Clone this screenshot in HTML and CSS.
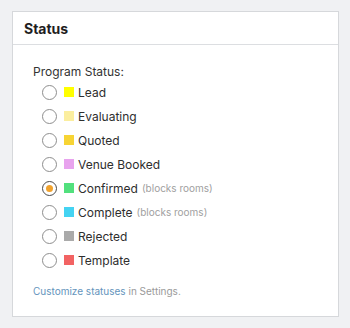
FILE: index.html
```html
<!DOCTYPE html>
<html>
<head>
<meta charset="utf-8">
<link rel="stylesheet" href="styles.css">
</head>
<body>
<div class="card">
  <div class="card-header">Status</div>
  <div class="card-body">
    <div class="label">Program Status:</div>
    <div class="options">
      <label class="opt"><span class="radio"></span><span class="sw" style="background:#ffff00"></span><span class="name">Lead</span></label>
      <label class="opt"><span class="radio"></span><span class="sw" style="background:#fbee9f"></span><span class="name">Evaluating</span></label>
      <label class="opt"><span class="radio"></span><span class="sw" style="background:#f7d434"></span><span class="name">Quoted</span></label>
      <label class="opt"><span class="radio"></span><span class="sw" style="background:#e8a3ee"></span><span class="name">Venue Booked</span></label>
      <label class="opt"><span class="radio checked"></span><span class="sw" style="background:#52e07d"></span><span class="name">Confirmed</span><span class="note">(blocks rooms)</span></label>
      <label class="opt"><span class="radio"></span><span class="sw" style="background:#44d3f2"></span><span class="name">Complete</span><span class="note">(blocks rooms)</span></label>
      <label class="opt"><span class="radio"></span><span class="sw" style="background:#aaaaaa"></span><span class="name">Rejected</span></label>
      <label class="opt"><span class="radio"></span><span class="sw" style="background:#f26363"></span><span class="name">Template</span></label>
    </div>
    <div class="footer"><a class="link" href="#">Customize statuses</a> in Settings.</div>
  </div>
</div>
</body>
</html>
```

FILE: styles.css
```css
html, body {
  margin: 0;
  padding: 0;
  background: #f0f1f3;
}
body {
  padding: 11px 11px 0 12px;
  font-family: Inter, "Noto Sans", sans-serif;
  color: #2b2b2b;
}
.card {
  width: 325px;
  height: 304px;
  background: #fff;
  border: 1px solid #d6d8db;
  display: flex;
  flex-direction: column;
}
.card-header {
  height: 33px;
  box-sizing: border-box;
  padding: 0 11px;
  display: flex;
  align-items: center;
  font-size: 14px;
  font-weight: 700;
  color: #1e1e1e;
  border-bottom: 1px solid #dcdee1;
}
.card-body {
  padding: 19px 20px 0 20px;
}
.label {
  font-size: 12px;
  line-height: 16px;
  color: #333;
}
.options {
  display: flex;
  flex-direction: column;
  padding-left: 9px;
}
.opt {
  height: 24px;
  display: flex;
  align-items: center;
  font-size: 12px;
  color: #2e2e2e;
}
.radio {
  width: 13px;
  height: 13px;
  border: 1px solid #8e8e8e;
  border-radius: 50%;
  box-sizing: content-box;
  display: flex;
  align-items: center;
  justify-content: center;
  margin-right: 7px;
  background: #fff;
}
.radio.checked {
  border-color: #4a4a4a;
}
.radio.checked::after {
  content: "";
  width: 7px;
  height: 7px;
  border-radius: 50%;
  background: #f0a22e;
}
.sw {
  width: 10px;
  height: 10px;
  margin-right: 4px;
}
.note {
  font-size: 10px;
  color: #a0a0a0;
  margin-left: 4px;
}
.footer {
  margin-top: 11px;
  font-size: 10px;
  line-height: 16px;
  color: #9a9a9a;
}
.link {
  color: #6494bc;
  text-decoration: none;
}
```
